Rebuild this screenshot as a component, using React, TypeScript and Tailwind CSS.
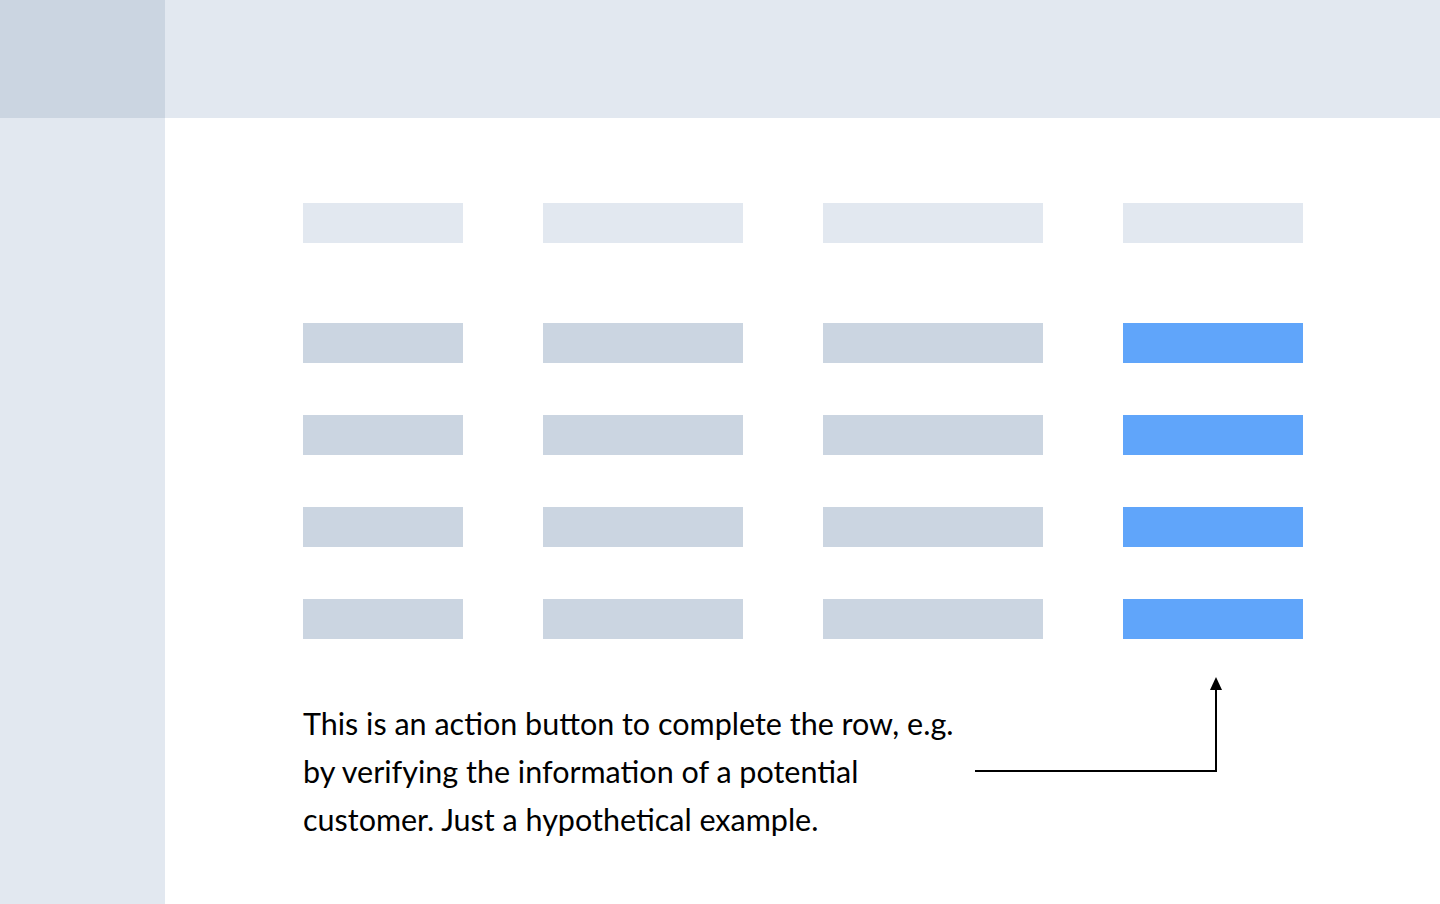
const headers = ["w-[160px]", "w-[200px]", "w-[220px]", "w-[180px]"];

function Row({ head }: { head?: boolean }) {
  return (
    <div className="flex gap-[80px]">
      {headers.map((w, i) => (
        <div
          key={i}
          className={`${w} h-[40px] ${
            head ? "bg-[#e2e8f0]" : i === 3 ? "bg-[#60a5fa]" : "bg-[#cbd5e1]"
          }`}
        />
      ))}
    </div>
  );
}

export default function App() {
  return (
    <div
      className="flex h-[904px] w-[1440px] overflow-hidden bg-white"
      style={{ fontFamily: "Lato, 'Noto Sans', sans-serif" }}
    >
      <aside className="flex w-[165px] flex-col bg-[#e2e8f0]">
        <div className="h-[118px] bg-[#cbd5e1]" />
      </aside>
      <main className="flex flex-1 flex-col">
        <header className="h-[118px] bg-[#e2e8f0]" />
        <div className="flex flex-col pl-[138px] pt-[85px]">
          <Row head />
          <div className="mt-[80px] flex flex-col gap-[52px]">
            <Row />
            <Row />
            <Row />
            <Row />
          </div>
          <div className="mt-[38px] flex items-start">
            <p className="w-[672px] pr-[8px] pt-[22px] text-[30.5px] leading-[48px] text-black">
              This is an action button to complete the row, e.g. by verifying
              the information of a potential customer. Just a hypothetical
              example.
            </p>
            <svg width="250" height="100" viewBox="0 0 250 100" fill="none">
              <path d="M0 94H241V12" stroke="black" strokeWidth="2" />
              <path d="M241 0L235 13H247Z" fill="black" />
            </svg>
          </div>
        </div>
      </main>
    </div>
  );
}
